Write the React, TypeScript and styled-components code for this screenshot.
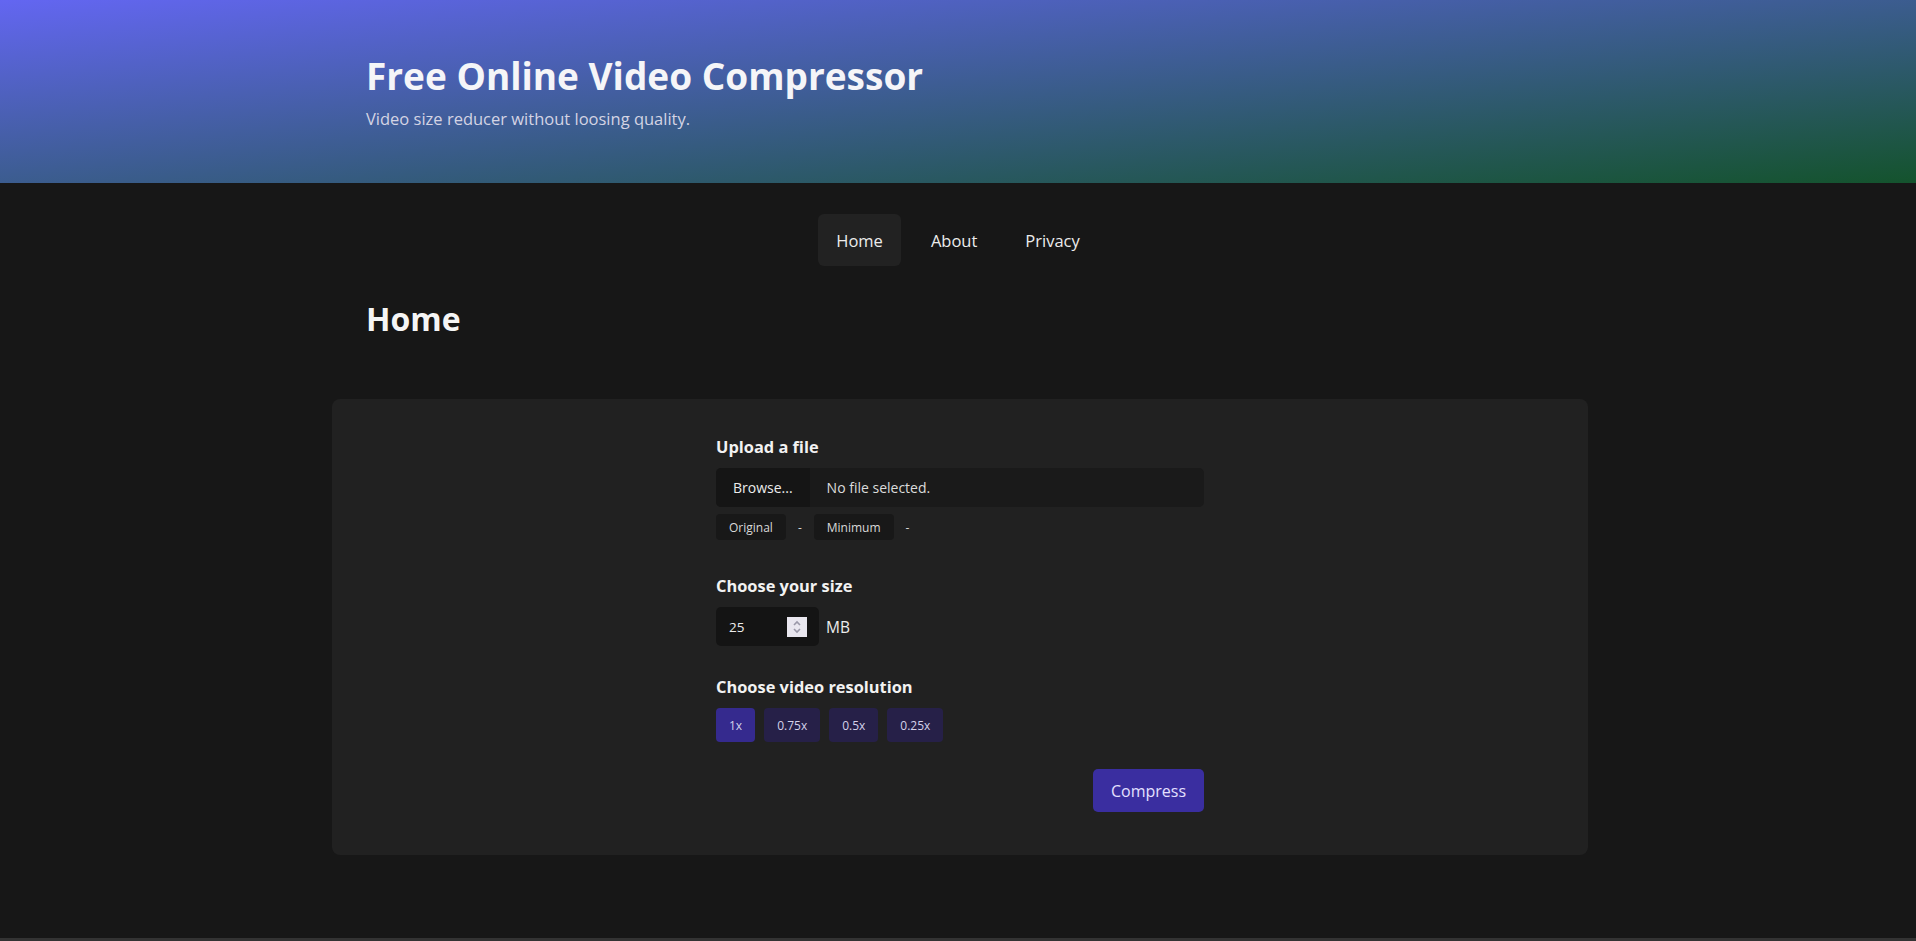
import React from "react";
import styled, { createGlobalStyle } from "styled-components";

const Global = createGlobalStyle`
  html, body { margin: 0; padding: 0; background: #171717; }
  body {
    font-family: "Open Sans", "Noto Sans", sans-serif;
    color: #ececec;
  }
  * { box-sizing: border-box; }
`;

const Page = styled.div`
  min-height: 100vh;
  display: flex;
  flex-direction: column;
`;

const Header = styled.header`
  height: 183px;
  background: linear-gradient(to bottom right, #6366f1, #14532d);
`;

const HeaderInner = styled.div`
  width: 1256px;
  margin: 0 auto;
  padding: 51px 36px 0;
`;

const Title = styled.h1`
  margin: 0;
  font-size: 37px;
  line-height: 50px;
  font-weight: 700;
  color: #f5f5f8;
`;

const Subtitle = styled.p`
  margin: 6px 0 0;
  font-size: 16.5px;
  line-height: 24px;
  color: #d4d4e4;
`;

const Nav = styled.nav`
  display: flex;
  justify-content: center;
  gap: 12px;
  margin-top: 31px;
`;

const NavLink = styled.a<{ $active?: boolean }>`
  display: flex;
  align-items: center;
  height: 52px;
  padding: 0 18px;
  border-radius: 6px;
  font-size: 16.5px;
  color: #ececec;
  background: ${(p) => (p.$active ? "#222222" : "transparent")};
  cursor: pointer;
`;

const Main = styled.main`
  flex: 1;
  width: 1256px;
  margin-left: calc(50% - 626px);
  padding-bottom: 82px;
`;

const PageTitle = styled.h2`
  margin: 31px 0 0;
  padding: 0 34px;
  font-size: 32px;
  line-height: 44px;
  font-weight: 700;
  color: #f5f5f5;
`;

const Card = styled.section`
  margin-top: 58px;
  background: #212121;
  border-radius: 8px;
  padding: 37px 0 43px;
`;

const Form = styled.div`
  width: 488px;
  margin: 0 auto;
  display: flex;
  flex-direction: column;
`;

const Label = styled.div`
  font-size: 16.4px;
  font-weight: 700;
  line-height: 22px;
  color: #f2f2f2;
  margin-bottom: 10px;
`;

const Section = styled.div<{ $gap?: number }>`
  margin-top: ${(p) => p.$gap ?? 0}px;
`;

const FileBox = styled.div`
  display: flex;
  align-items: center;
  height: 39px;
  background: #1a1a1a;
  border-radius: 5px;
  overflow: hidden;
  font-size: 14px;
`;

const BrowseButton = styled.div`
  height: 100%;
  display: flex;
  align-items: center;
  padding: 0 17px;
  background: #151515;
  color: #ececec;
`;

const FileName = styled.span`
  margin-left: 17px;
  color: #dcdcdc;
`;

const ChipRow = styled.div`
  display: flex;
  align-items: center;
  gap: 12px;
  margin-top: 7px;
  font-size: 12px;
  color: #d8d8d8;
`;

const Chip = styled.span`
  display: flex;
  align-items: center;
  height: 26px;
  padding: 0 13px;
  background: #181818;
  border-radius: 4px;
`;

const SizeRow = styled.div`
  display: flex;
  align-items: center;
  gap: 7px;
  font-size: 15.5px;
`;

const NumberBox = styled.div`
  width: 103px;
  height: 39px;
  background: #141414;
  border-radius: 5px;
  display: flex;
  align-items: center;
  padding: 0 12px 0 13px;
  justify-content: space-between;
  font-size: 13.5px;
  color: #ececec;
`;

const Spinner = styled.span`
  width: 20px;
  height: 20px;
  background: #e9e7ef;
  display: flex;
  align-items: center;
  justify-content: center;
`;

const ResRow = styled.div`
  display: flex;
  gap: 9px;
`;

const ResButton = styled.button<{ $active?: boolean }>`
  height: 34px;
  padding: 0 13px;
  border: none;
  border-radius: 4px;
  font-family: inherit;
  font-size: 12px;
  color: #d4d2ea;
  background: ${(p) => (p.$active ? "#352a8e" : "#262048")};
  cursor: pointer;
`;

const Actions = styled.div`
  display: flex;
  justify-content: flex-end;
  margin-top: 27px;
`;

const CompressButton = styled.button`
  height: 43px;
  padding: 0 18px;
  border: none;
  border-radius: 5px;
  background: #3a2ea0;
  color: #e4e0ff;
  font-family: inherit;
  font-size: 16px;
  cursor: pointer;
`;

const Footer = styled.footer`
  border-top: 3px solid #333333;
  height: 3px;
`;

const SpinIcon = () => (
  <svg width="10" height="14" viewBox="0 0 10 14" fill="none" stroke="#9a98a8" strokeWidth="1.6">
    <path d="M2 5 L5 2 L8 5" />
    <path d="M2 9 L5 12 L8 9" />
  </svg>
);

export default function App() {
  return (
    <>
      <Global />
      <Page>
        <Header>
          <HeaderInner>
            <Title>Free Online Video Compressor</Title>
            <Subtitle>Video size reducer without loosing quality.</Subtitle>
          </HeaderInner>
        </Header>
        <Nav>
          <NavLink $active>Home</NavLink>
          <NavLink>About</NavLink>
          <NavLink>Privacy</NavLink>
        </Nav>
        <Main>
          <PageTitle>Home</PageTitle>
          <Card>
            <Form>
              <Section>
                <Label>Upload a file</Label>
                <FileBox>
                  <BrowseButton>Browse...</BrowseButton>
                  <FileName>No file selected.</FileName>
                </FileBox>
                <ChipRow>
                  <Chip>Original</Chip>
                  <span>-</span>
                  <Chip>Minimum</Chip>
                  <span>-</span>
                </ChipRow>
              </Section>
              <Section $gap={35}>
                <Label>Choose your size</Label>
                <SizeRow>
                  <NumberBox>
                    <span>25</span>
                    <Spinner>
                      <SpinIcon />
                    </Spinner>
                  </NumberBox>
                  <span>MB</span>
                </SizeRow>
              </Section>
              <Section $gap={30}>
                <Label>Choose video resolution</Label>
                <ResRow>
                  <ResButton $active>1x</ResButton>
                  <ResButton>0.75x</ResButton>
                  <ResButton>0.5x</ResButton>
                  <ResButton>0.25x</ResButton>
                </ResRow>
              </Section>
              <Actions>
                <CompressButton>Compress</CompressButton>
              </Actions>
            </Form>
          </Card>
        </Main>
        <Footer />
      </Page>
    </>
  );
}
